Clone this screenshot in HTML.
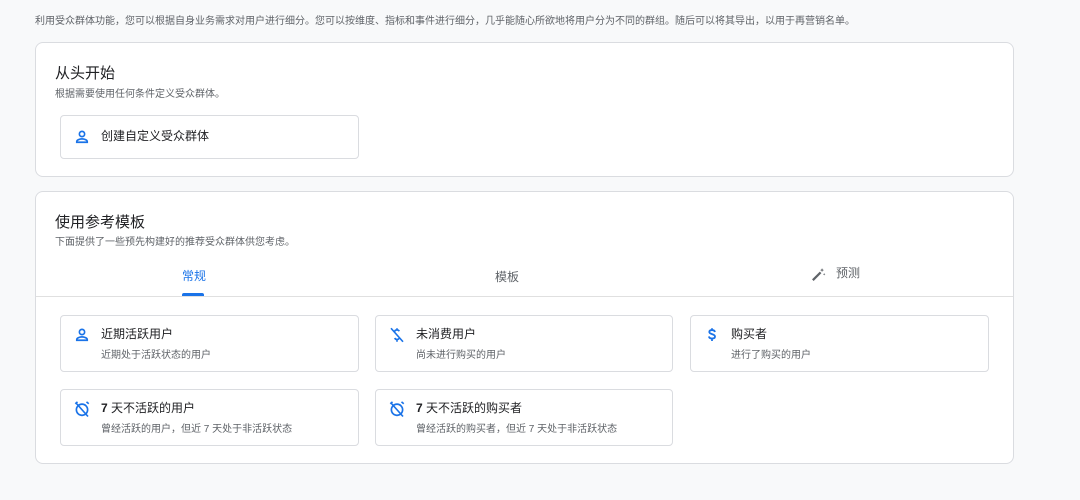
<!DOCTYPE html><html><head><meta charset="utf-8"><style>
*{margin:0;padding:0;box-sizing:border-box}
body{width:1080px;height:500px;background:#f8f9fa;font-family:"Liberation Sans","Noto Sans CJK SC",sans-serif;position:relative;overflow:hidden;color:#3c4043}
.a{position:absolute}
.card{position:absolute;background:#fff;border:1px solid #dadce0;border-radius:8px}
.it{position:absolute;border:1px solid #dadce0;border-radius:4px;background:#fff}
.it .t{position:absolute;left:40px;top:9px;font-size:12px;color:#202124}
.it .s{position:absolute;left:40px;top:30px;font-size:10px;color:#5f6368}
.it svg{position:absolute;left:12px;top:10px}
</style></head><body>
<div class="a" style="left:35px;top:12px;font-size:10px;color:#5f6368">利用受众群体功能，您可以根据自身业务需求对用户进行细分。您可以按维度、指标和事件进行细分，几乎能随心所欲地将用户分为不同的群组。随后可以将其导出，以用于再营销名单。</div>
<div class="card" style="left:35px;top:42px;width:979px;height:135px">
<div class="a" style="left:19px;top:19px;font-size:15px;color:#202124">从头开始</div>
<div class="a" style="left:19px;top:42px;font-size:10px;color:#5f6368">根据需要使用任何条件定义受众群体。</div>
<div class="it" style="left:24px;top:72px;width:299px;height:44px">
<svg width="18" height="18" viewBox="0 0 24 24" style="top:12px"><circle cx="12" cy="8" r="3.5" fill="none" stroke="#1a73e8" stroke-width="2.2"/><path d="M5 19v-1c0-2 4-3.5 7-3.5s7 1.5 7 3.5v1z" fill="none" stroke="#1a73e8" stroke-width="2.2"/></svg>
<div class="t" style="top:11px">创建自定义受众群体</div></div>
</div>
<div class="card" style="left:35px;top:191px;width:979px;height:273px">
<div class="a" style="left:19px;top:19px;font-size:15px;color:#202124">使用参考模板</div>
<div class="a" style="left:19px;top:41px;font-size:10px;color:#5f6368">下面提供了一些预先构建好的推荐受众群体供您考虑。</div>
<div class="a" style="left:146px;top:75px;font-size:12px;color:#1a73e8">常规</div>
<div class="a" style="left:146px;top:101px;width:22px;height:3px;background:#1a73e8;border-radius:2px 2px 0 0"></div>
<div class="a" style="left:459px;top:76px;font-size:12px;color:#5f6368">模板</div>
<svg class="a" style="left:774px;top:74px" width="17" height="17" viewBox="0 0 24 24"><path d="M4 20L15 9" stroke="#5f6368" stroke-width="3.2"/><path d="M17 3l.8 2 2 .8-2 .8-.8 2-.8-2-2-.8 2-.8zM20 10l.5 1.2 1.2.5-1.2.5-.5 1.2-.5-1.2-1.2-.5 1.2-.5z" fill="#5f6368"/></svg>
<div class="a" style="left:800px;top:72px;font-size:12px;color:#5f6368">预测</div>
<div class="a" style="left:0;top:104px;width:977px;height:1px;background:#e0e0e0"></div>
<div class="it" style="left:24px;top:123px;width:299px;height:57px">
<svg width="18" height="18" viewBox="0 0 24 24"><circle cx="12" cy="8" r="3.5" fill="none" stroke="#1a73e8" stroke-width="2.2"/><path d="M5 19v-1c0-2 4-3.5 7-3.5s7 1.5 7 3.5v1z" fill="none" stroke="#1a73e8" stroke-width="2.2"/></svg>
<div class="t">近期活跃用户</div><div class="s">近期处于活跃状态的用户</div></div>
<div class="it" style="left:339px;top:123px;width:298px;height:57px">
<svg width="18" height="18" viewBox="0 0 24 24"><path d="M4 3l16 18M15 7c-.5-1-1.5-1.7-3-1.7-2 0-3 1-3 2.3M12 3v3M12 18v3M9 16c.5 1.2 1.6 2 3 2 1.3 0 2.3-.6 2.8-1.5" stroke="#1a73e8" stroke-width="2.2" fill="none"/></svg>
<div class="t">未消费用户</div><div class="s">尚未进行购买的用户</div></div>
<div class="it" style="left:654px;top:123px;width:299px;height:57px">
<svg width="18" height="18" viewBox="0 0 24 24"><path d="M16 8c-.4-1.6-1.8-2.6-4-2.6-2.3 0-3.6 1.1-3.6 2.6 0 3.6 7.6 2 7.6 6 0 1.6-1.5 2.7-4 2.7-2.3 0-3.8-1-4.1-2.8M12 3v3M12 17v3" stroke="#1a73e8" stroke-width="2.4" fill="none"/></svg>
<div class="t">购买者</div><div class="s">进行了购买的用户</div></div>
<div class="it" style="left:24px;top:197px;width:299px;height:57px">
<svg width="18" height="18" viewBox="0 0 24 24"><circle cx="12" cy="13" r="7.5" fill="none" stroke="#1a73e8" stroke-width="2.2"/><path d="M3 5l3-2.5M21 5l-3-2.5M4 4l16 18" stroke="#1a73e8" stroke-width="2.2"/></svg>
<div class="t" style="font-weight:bold">7 <span style="font-weight:normal">天不活跃的用户</span></div><div class="s">曾经活跃的用户，但近 7 天处于非活跃状态</div></div>
<div class="it" style="left:339px;top:197px;width:298px;height:57px">
<svg width="18" height="18" viewBox="0 0 24 24"><circle cx="12" cy="13" r="7.5" fill="none" stroke="#1a73e8" stroke-width="2.2"/><path d="M3 5l3-2.5M21 5l-3-2.5M4 4l16 18" stroke="#1a73e8" stroke-width="2.2"/></svg>
<div class="t" style="font-weight:bold">7 <span style="font-weight:normal">天不活跃的购买者</span></div><div class="s">曾经活跃的购买者，但近 7 天处于非活跃状态</div></div>
</div>
</body></html>
